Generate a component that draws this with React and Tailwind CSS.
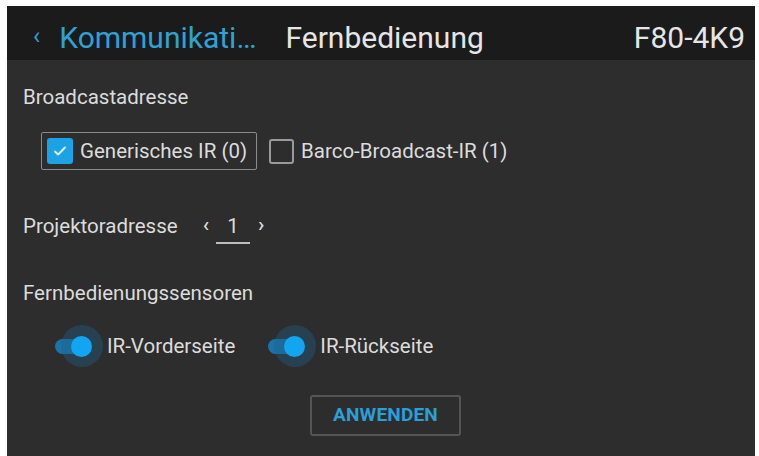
import React, { useState } from 'react';

const font = { fontFamily: 'Roboto, "Liberation Sans", sans-serif' };

const Check = ({ checked, label }) => (
  <div className="flex items-center gap-[7px]">
    <div
      className={
        checked
          ? 'w-[26px] h-[26px] rounded-[3px] bg-[#1ba3e6] flex items-center justify-center'
          : 'w-[25px] h-[25px] rounded-[3px] border-2 border-[#9a9a9a]'
      }
    >
      {checked && (
        <svg width="16" height="16" viewBox="0 0 16 16" fill="none">
          <path d="M3 8.5l3.2 3L13 4.5" stroke="#e8f6ff" strokeWidth="1.8" strokeLinecap="round" strokeLinejoin="round" />
        </svg>
      )}
    </div>
    <span className="text-[20.5px] leading-[24px] text-[#dcdcdc]">{label}</span>
  </div>
);

const Toggle = ({ label }) => (
  <div className="flex items-center">
    <div className="relative w-[42px] h-[22px]">
      <div className="absolute left-0 top-[4px] w-[36px] h-[15px] rounded-full bg-[#1b74a8]" />
      <div className="absolute left-[6px] top-[-10px] w-[42px] h-[42px] rounded-full bg-[#1d5f86]/40" />
      <div className="absolute left-[16px] top-[1px] w-[21px] h-[21px] rounded-full bg-[#12a6f2]" />
    </div>
    <span className="text-[20.5px] leading-[24px] text-[#dcdcdc] ml-[10px]">{label}</span>
  </div>
);

export default function App() {
  const [addr] = useState(1);

  return (
    <div className="w-[759px] h-[456px] bg-white pt-[6px] pl-[7px] pr-[4px]" style={font}>
      <div className="h-full flex flex-col bg-[#2d2d2d]">
        <div className="h-[54px] bg-[#1b1b1b] flex items-center pl-[26px] pr-[10px] pt-[9px]">
          <span className="text-[#2ea2d6] text-[24px] mr-[19px] mt-[-4px]">‹</span>
          <span className="text-[#2ea2d6] text-[30px] leading-[36px]">Kommunikati…</span>
          <span className="text-[#e6e6e6] text-[30px] leading-[36px] ml-[29px]">Fernbedienung</span>
          <span className="text-[#e6e6e6] text-[30px] leading-[36px] ml-auto">F80-4K9</span>
        </div>

        <div className="flex flex-col pl-[16px] pt-[25px]">
          <div className="text-[20.5px] text-[#dcdcdc] leading-[24px]">Broadcastadresse</div>

          <div className="flex items-center mt-[23px] ml-[18px]">
            <div className="border border-[#8a8a8a] rounded-[2px] h-[38px] w-[216px] px-[5px] flex items-center">
              <Check checked label="Generisches IR (0)" />
            </div>
            <div className="ml-[12px]">
              <Check label="Barco-Broadcast-IR (1)" />
            </div>
          </div>

          <div className="flex items-center mt-[38px]">
            <span className="text-[20.5px] leading-[24px] text-[#dcdcdc]">Projektoradresse</span>
            <span className="text-[21px] font-medium text-[#dcdcdc] ml-[25px] mb-[3px]">‹</span>
            <div className="flex flex-col items-center ml-[7px] w-[34px] mt-[6px]">
              <span className="text-[20.5px] text-[#dcdcdc] leading-[24px]">{addr}</span>
              <div className="w-[34px] h-[2px] bg-[#bdbdbd] mt-[4px]" />
            </div>
            <span className="text-[21px] font-medium text-[#dcdcdc] ml-[8px] mb-[3px]">›</span>
          </div>

          <div className="text-[20.5px] leading-[24px] text-[#dcdcdc] mt-[37px]">Fernbedienungssensoren</div>

          <div className="flex items-center mt-[29px] ml-[32px] gap-[33px]">
            <Toggle label="IR-Vorderseite" />
            <Toggle label="IR-Rückseite" />
          </div>

          <div className="flex mt-[37px] pl-[287px]">
            <button className="w-[151px] h-[41px] border-2 border-[#555] rounded-[3px] text-[#2a9fd8] font-bold text-[19px] tracking-[0.2px]">
              ANWENDEN
            </button>
          </div>
        </div>
      </div>
    </div>
  );
}
